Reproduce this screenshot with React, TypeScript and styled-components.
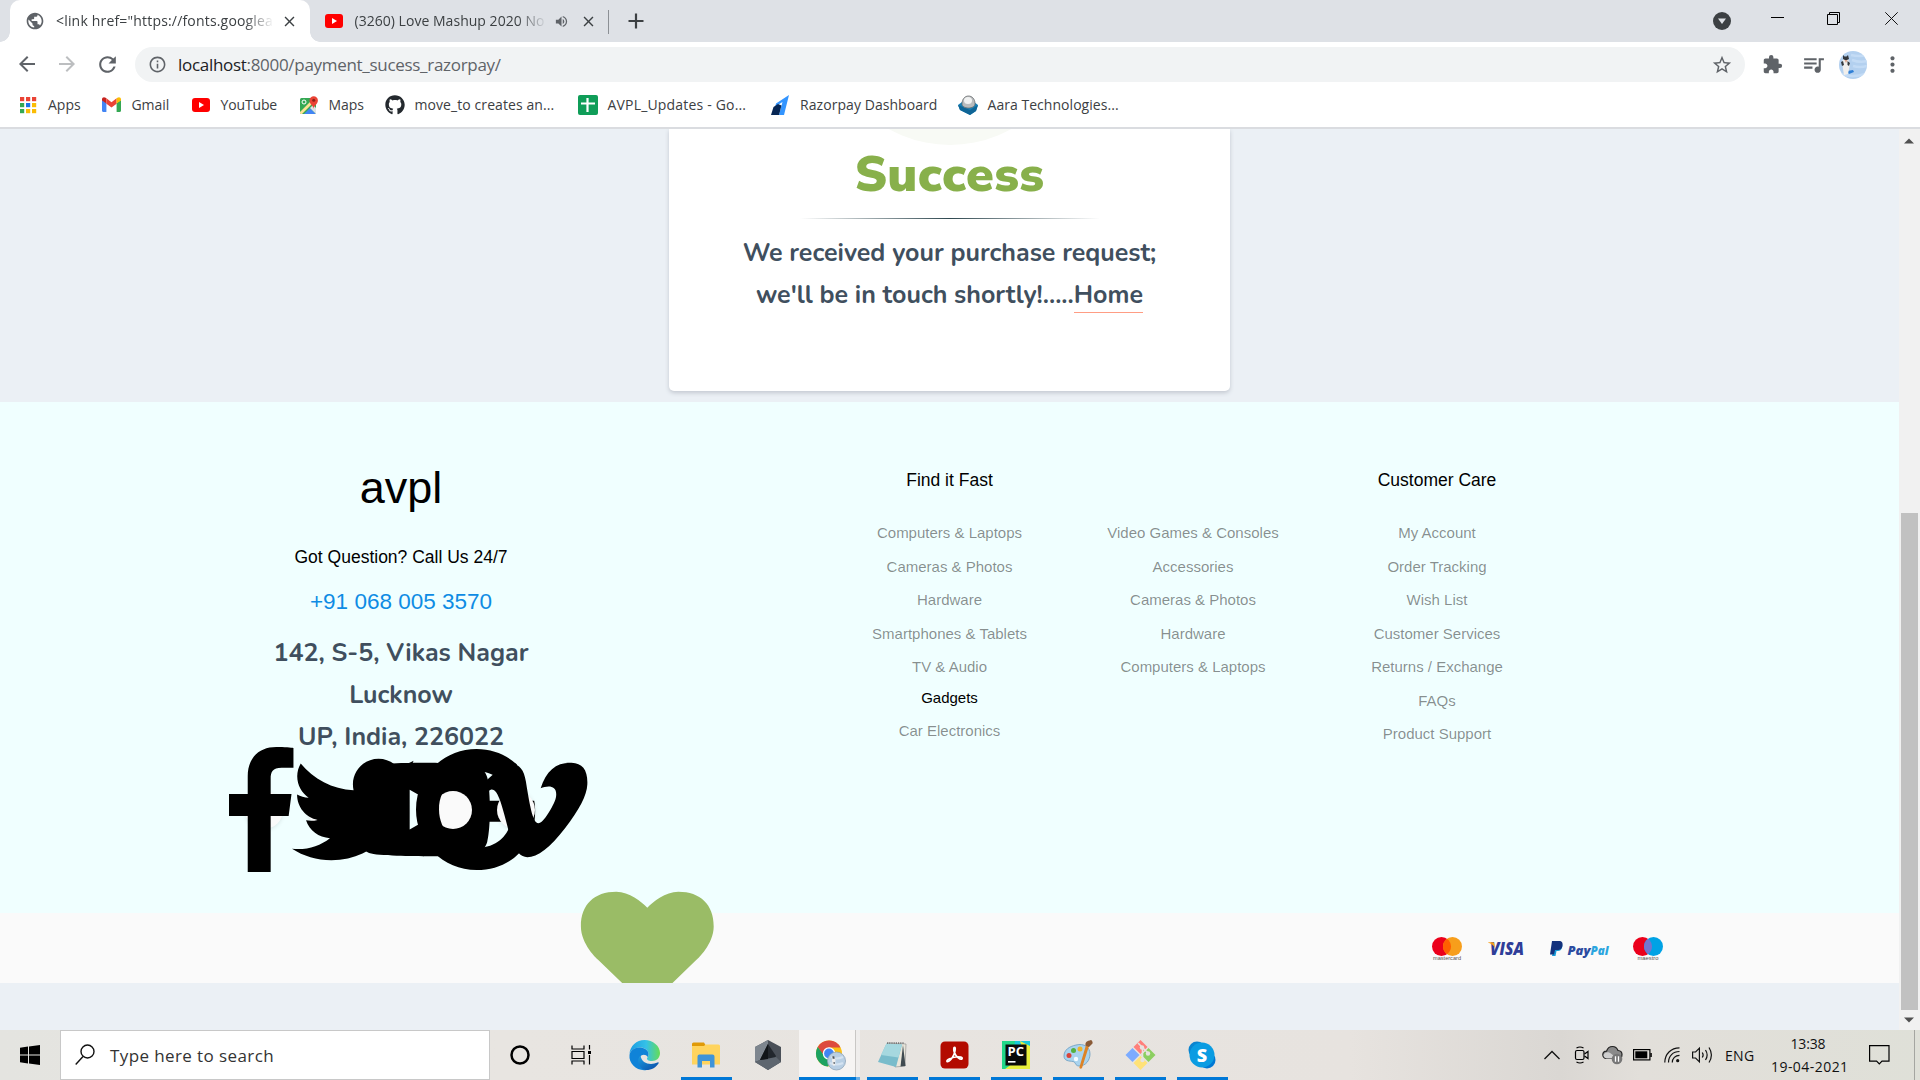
import React from "react";
import styled, { createGlobalStyle, css } from "styled-components";
import {
  MdArrowBack,
  MdArrowForward,
  MdClose,
  MdExtension,
  MdInfoOutline,
  MdMoreVert,
  MdPublic,
  MdQueueMusic,
  MdRefresh,
  MdStarBorder,
  MdVolumeUp,
} from "react-icons/md";
import { FaGithub } from "react-icons/fa";

const GlobalStyle = createGlobalStyle`
  *, *::before, *::after { box-sizing: border-box; }
  body { margin: 0; overflow: hidden; background: #ebf0f5; }
  p, h1, h3, ul { margin: 0; padding: 0; font-weight: 400; }
  ul { list-style: none; }
  svg { display: block; flex: none; overflow: visible; }
`;

const ui = `"Segoe UI", "Open Sans", "Noto Sans", sans-serif`;
const arial = `"Liberation Sans", Arial, sans-serif`;
const nunito = `Nunito, Lato, "Open Sans", sans-serif`;

const Screen = styled.div`
  width: 1920px;
  height: 1080px;
  display: flex;
  flex-direction: column;
  overflow: hidden;
  font-family: ${ui};
`;

/* ---------- Browser window ---------- */

const TabStrip = styled.div`
  height: 42px;
  flex: none;
  display: flex;
  align-items: stretch;
  padding-left: 10px;
  background: #dee1e6;
  color: #3c4043;
`;

const Tab = styled.div<{ $active?: boolean; $w: number }>`
  position: relative;
  width: ${(p) => p.$w}px;
  display: flex;
  align-items: center;
  padding-left: 15px;
  font-size: 14px;
  ${(p) =>
    p.$active &&
    css`
      background: #fff;
      border-radius: 10px 10px 0 0;
      &::before,
      &::after {
        content: "";
        position: absolute;
        bottom: 0;
        width: 10px;
        height: 10px;
      }
      &::before {
        left: -10px;
        background: radial-gradient(circle at 0 0, transparent 9.5px, #fff 10px);
      }
      &::after {
        right: -10px;
        background: radial-gradient(circle at 100% 0, transparent 9.5px, #fff 10px);
      }
    `}
`;

const TabTitle = styled.span<{ $w: number; $ls: number; $gap: number }>`
  width: ${(p) => p.$w}px;
  margin-left: ${(p) => p.$gap}px;
  letter-spacing: ${(p) => p.$ls}px;
  white-space: nowrap;
  overflow: hidden;
  line-height: 22px;
  mask-image: linear-gradient(90deg, #000 calc(100% - 30px), transparent);
`;

const TabButton = styled.span<{ $ml: number }>`
  margin-left: ${(p) => p.$ml}px;
  display: flex;
`;

const TabDivider = styled.div`
  width: 1px;
  height: 24px;
  margin: 10px 19px 0 0;
  background: #8c9095;
`;

const NewTab = styled.div`
  display: flex;
  align-items: center;
`;

const WindowButtons = styled.div`
  margin-left: auto;
  display: flex;
  align-items: flex-start;
  padding-top: 12px;
`;

const Slot = styled.div<{ $w: number }>`
  width: ${(p) => p.$w}px;
  flex: none;
  display: flex;
  justify-content: center;
  align-items: center;
`;

const Toolbar = styled.div`
  height: 46px;
  flex: none;
  display: flex;
  align-items: center;
  padding: 0 0 1px 15px;
  background: #fff;
  color: #5f6368;
`;

const NavButtons = styled.div`
  width: 120px;
  flex: none;
  display: flex;
  gap: 16px;
  svg:nth-child(2) { color: #bcbec0; }
`;

const AddressBar = styled.div`
  width: 1610px;
  flex: none;
  height: 35px;
  border-radius: 18px;
  background: #f1f3f4;
  display: flex;
  align-items: center;
  padding: 0 12px 0 13px;
`;

const Url = styled.span`
  margin: -1px auto 0 11px;
  font-size: 17px;
  letter-spacing: -0.3px;
  color: #5f6368;
  b { font-weight: 400; color: #202124; }
`;

const ToolbarIcons = styled.div`
  display: flex;
  align-items: center;
  margin-left: 7px;
`;

const Bookmarks = styled.div`
  height: 39px;
  flex: none;
  display: flex;
  align-items: center;
  padding: 0 0 6px 18px;
  background: #fff;
  color: #3c4043;
`;

const Bookmark = styled.div<{ $w: number; $ls: number }>`
  width: ${(p) => p.$w}px;
  display: flex;
  align-items: center;
  gap: 10px;
  font-size: 14px;
  line-height: 20px;
  letter-spacing: ${(p) => p.$ls}px;
  white-space: nowrap;
`;

const IconBox = styled.span`
  width: 20px;
  height: 20px;
  display: flex;
  align-items: center;
  justify-content: center;
`;

/* ---------- Page ---------- */

const Viewport = styled.div`
  height: 903px;
  flex: none;
  display: flex;
  border-top: 2px solid #dadce0;
`;

const Page = styled.main`
  width: 1899px;
  background: #ebf0f5;
`;

const Hero = styled.section`
  height: 273px;
  display: flex;
  justify-content: center;
  align-items: flex-start;
  overflow: hidden;
`;

const Card = styled.div`
  position: relative;
  width: 561px;
  height: 262px;
  padding-top: 16px;
  background: #fff;
  border-radius: 0 0 5px 5px;
  box-shadow: 0 2px 4px #c3c8d0;
  text-align: center;
`;

const BadgeClip = styled.div`
  position: absolute;
  inset: 0 0 auto 0;
  height: 16px;
  overflow: hidden;
  display: flex;
  justify-content: center;
  align-items: flex-end;
  &::after {
    content: "";
    flex: none;
    width: 250px;
    height: 250px;
    border-radius: 50%;
    background: #f8faf5;
  }
`;

const Title = styled.h1`
  position: relative;
  height: 60px;
  line-height: 60px;
  font-family: "Nunito Sans", "Open Sans", sans-serif;
  font-weight: 900;
  font-size: 50px;
  letter-spacing: 0.4px;
  color: #88b04b;
`;

const Rule = styled.div`
  width: 300px;
  height: 1px;
  margin: 13px auto 13px;
  background: linear-gradient(90deg, rgba(47, 72, 80, 0), #2f4850 50%, rgba(47, 72, 80, 0));
`;

const Strong = styled.p`
  font-family: ${nunito};
  font-weight: 660;
  font-size: 25px;
  line-height: 42px;
  color: #404f5e;
  white-space: nowrap;
`;

const HomeLink = styled.a`
  display: inline-block;
  line-height: 34px;
  border-bottom: 1px solid #ff9d84;
`;

const Footer = styled.footer`
  height: 511px;
  display: grid;
  grid-template-columns: 576px 244px 244px 244px;
  align-items: start;
  padding: 57px 0 0 251px;
  background: #f0ffff;
  font-family: ${arial};
`;

const Contact = styled.div`
  width: 300px;
  text-align: center;
`;

const Brand = styled.div`
  font-size: 45px;
  line-height: 58px;
  color: #000;
`;

const Question = styled.div`
  margin-top: 28px;
  font-size: 17.5px;
  line-height: 24px;
  color: #000;
`;

const Phone = styled.div`
  margin: 18px 0 15px;
  font-size: 22.5px;
  line-height: 30px;
  color: #0e8ce4;
`;

const Social = styled.ul`
  display: flex;
  gap: 24.9px;
  margin: 33.2px 0 0 -5.8px;
`;

const SocialItem = styled.li<{ $dx: number }>`
  position: relative;
  flex: none;
  width: 38px;
  height: 38px;
  border-radius: 50%;
  background: #fafafa;
  box-shadow: 0 1px 4px rgba(0, 0, 0, 0.1);
  svg {
    position: absolute;
    top: -44.5px;
    left: ${(p) => p.$dx}px;
  }
`;

const LinkColumn = styled.div`
  padding: 9px 0 0;
  text-align: center;
  &:nth-child(2) { padding-left: 1px; }
`;

const ColumnTitle = styled.h3`
  height: 24px;
  margin-bottom: 24px;
  font-size: 17.5px;
  line-height: 24px;
  color: #000;
`;

const FooterLink = styled.li<{ $current?: boolean }>`
  font-size: 15px;
  line-height: ${(p) => (p.$current ? 28 : 33.5)}px;
  margin-bottom: ${(p) => (p.$current ? 2 : 0)}px;
  color: ${(p) => (p.$current ? "#000" : "rgba(0, 0, 0, 0.45)")};
`;

const Copyright = styled.div`
  position: relative;
  height: 70px;
  display: flex;
  align-items: center;
  padding-left: 1432px;
  background: #fafafa;
`;

const HeartClip = styled.div`
  position: absolute;
  left: 577px;
  bottom: 0;
  height: 97px;
  overflow: hidden;
`;

const Payments = styled.div`
  display: flex;
  align-items: flex-start;
  padding-top: 3px;
`;

const ScrollTrack = styled.div`
  width: 21px;
  background: #f1f1f1;
  display: flex;
  flex-direction: column;
  align-items: center;
  justify-content: space-between;
  padding: 9px 1px 7px 0;
`;

const ScrollThumb = styled.div`
  width: 17px;
  height: 497px;
  margin: auto 0 7px;
  background: #c1c1c1;
`;

/* ---------- Taskbar ---------- */

const Taskbar = styled.div`
  height: 50px;
  flex: none;
  display: flex;
  background: linear-gradient(90deg, #e4e4e0 0, #e8e5e1 500px, #e7e3df 1350px, #dad7d3 1560px, #e2dfda 1640px, #dfe0d8 1920px);
  color: #111;
`;

const SearchBox = styled.div`
  width: 430px;
  display: flex;
  align-items: center;
  gap: 15px;
  padding-left: 14px;
  background: #fff;
  border: 1px solid #c8c8c8;
  font-size: 17px;
  letter-spacing: 0.4px;
  color: #333;
`;

const TaskCell = styled.div<{ $w: number; $state?: "open" | "active" }>`
  position: relative;
  width: ${(p) => p.$w}px;
  display: flex;
  align-items: center;
  justify-content: center;
  ${(p) =>
    p.$state &&
    css`
      &::after {
        content: "";
        position: absolute;
        bottom: 0;
        left: ${p.$state === "active" ? 0 : 6}px;
        width: ${p.$state === "active" ? 61 : 51}px;
        height: 3px;
        background: ${p.$state === "active" ? "linear-gradient(90deg, #0078d7 57px, #6aaee6 57px)" : "#0078d7"};
      }
    `}
  ${(p) =>
    p.$state === "active" &&
    css`
      background: linear-gradient(90deg, #f6f4f3 56px, #c9c7c5 56px, #c9c7c5 57px, #efedec 57px, #efedec 61px, transparent 61px);
    `}
`;

const Tray = styled.div`
  margin-left: auto;
  display: flex;
  align-items: center;
  font-size: 14px;
`;

const Lang = styled.span`
  width: 54px;
  padding-left: 8px;
  letter-spacing: 0.3px;
`;

const Clock = styled.div`
  width: 74px;
  text-align: center;
  line-height: 23px;
  letter-spacing: 0.45px;
  white-space: nowrap;
  div:first-child { letter-spacing: -0.15px; }
`;

const PeekEdge = styled.div`
  width: 6px;
  height: 50px;
  border-left: 1px solid #a5a6a1;
`;

/* ---------- Drawings ---------- */

const YouTubeIcon = ({ w = 18, h = 14 }) => (
  <svg width={w} height={h} viewBox="0 0 18 14">
    <rect width="18" height="14" rx="3" fill="#f00" />
    <path d="M7 4l5 3-5 3z" fill="#fff" />
  </svg>
);

const AppsIcon = () => {
  const colors = ["#ea4335", "#ea4335", "#ea4335", "#34a853", "#1a73e8", "#fbbc04", "#34a853", "#fbbc04", "#fbbc04"];
  return (
    <svg width="18" height="18" viewBox="0 0 18 18">
      {colors.map((c, i) => (
        <rect key={i} x={1 + (i % 3) * 6} y={1 + Math.floor(i / 3) * 6} width="4.2" height="4.2" fill={c} />
      ))}
    </svg>
  );
};

const GmailIcon = () => (
  <svg width="19" height="15" viewBox="0 0 19 15">
    <path d="M0 3v10.5C0 14.4.6 15 1.4 15h3V6z" fill="#4285f4" />
    <path d="M19 3v10.5c0 .9-.6 1.500-1.400 1.500h-3V6z" fill="#34a853" />
    <path d="M0 2.300C0 .3 2 -.5 3.600.7L4.400 1.300V6.500L0 3.500z" fill="#c5221f" />
    <path d="M4.400 1.300l5.100 3.900 5.100-3.900v5.400L9.500 10.500 4.400 6.700z" fill="#ea4335" />
    <path d="M19 2.300C19 .3 17-.5 15.400.7l-.8.6v5.200l4.400-3z" fill="#fbbc04" />
  </svg>
);

const MapsIcon = () => (
  <svg width="20" height="20" viewBox="0 0 20 20">
    <rect x="1" y="3" width="16" height="16" rx="1.500" fill="#34a853" />
    <path d="M1 17L15 3h2v2L3 19H2a1 1 0 0 1-1-1z" fill="#fde293" />
    <path d="M5 19l6-6 6 6z" fill="#4285f4" />
    <path d="M17 19l-6-6 3-3 3 3z" fill="#dfe3e6" />
    <circle cx="5" cy="7" r="2" fill="none" stroke="#fff" strokeWidth="1" />
    <path d="M14.500 14c0-3.500-4-4.500-4-8.500a4.200 4.200 0 0 1 8.400 0c0 4-4.400 5-4.400 8.500z" fill="#ea4335" />
    <circle cx="14.700" cy="5.300" r="1.500" fill="#8c2217" />
  </svg>
);

const SheetsIcon = () => (
  <svg width="20" height="20" viewBox="0 0 20 20">
    <rect width="20" height="20" rx="2" fill="#0f9d58" />
    <path d="M9.500 3v14M3 8.500h14" stroke="#fff" strokeWidth="2.200" />
  </svg>
);

const RazorpayIcon = () => (
  <svg width="18" height="20" viewBox="0 0 18 20">
    <path d="M18 0L5 8.500 4.300 11.500 11.500 7 8 20h5z" fill="#3395ff" />
    <path d="M7 9L2.500 12 0 20h8l2.500-9.500z" fill="#072654" />
  </svg>
);

const AaraIcon = () => (
  <svg width="20" height="20" viewBox="0 0 20 20">
    <path d="M0 10l4-3h12l4 3-2 6-6 4-10-5z" fill="#1580b8" />
    <path d="M0 10l12 5 8-5-2 6-6 4-10-5z" fill="#0f6596" />
    <path d="M4 9c0-5 3-8 6.500-8S17 4 17 8.500c0 3-3 4.500-6.500 4.500S4 11.500 4 9z" fill="#b9bcbe" stroke="#6a6d70" strokeWidth=".8" />
    <ellipse cx="10" cy="5.500" rx="4" ry="3.600" fill="#f1f2f2" />
  </svg>
);

const Avatar = () => (
  <svg width="28" height="28" viewBox="0 0 28 28">
    <defs>
      <clipPath id="avatarClip"><circle cx="14" cy="14" r="14" /></clipPath>
    </defs>
    <g clipPath="url(#avatarClip)">
      <rect width="28" height="28" fill="#b3d0ef" />
      <path d="M12 4q8 2 16 0M13 9q8 3 15 1M14 15q7 2 14 0M2 23q12 4 24 0" stroke="#c3dbf5" strokeWidth="2.500" fill="none" />
      <path d="M8 20l6-1 1 2-5 2z" fill="#2f7fd6" />
      <path d="M3 10l3-3 3 1 2 5-2 10-4 1-1-6z" fill="#f1efec" />
      <path d="M4 4l1.500 1.500h2L9 4l1 4-3 1.500L4 8zM2 11l2-1 1 4-2 1zM8.500 10l2.500 2-1 3-1.500-1z" fill="#33383d" />
      <path d="M5.500 9h3l-1.500 3z" fill="#d9a58c" />
    </g>
  </svg>
);

const TabSearchIcon = () => (
  <svg width="18" height="18" viewBox="0 0 18 18">
    <circle cx="9" cy="9" r="9" fill="#3c4043" />
    <path d="M5 6.500h8L9 12z" fill="#dee1e6" />
  </svg>
);

const socialGlyphs = [
  {
    w: 264,
    dx: -16.700,
    d: "M76.700 512V283H0v-91h76.700v-71.700C76.700 42.400 124.300 0 193.800 0c33.300 0 61.900 2.500 70.200 3.600V85h-48.200c-37.800 0-45.100 18-45.100 44.300V192H256l-11.700 91h-73.600v229",
  },
  {
    w: 512,
    dx: -15.900,
    d: "M459.370 151.716c.325 4.548.325 9.097.325 13.645 0 138.720-105.583 298.558-298.558 298.558-59.452 0-114.680-17.219-161.137-47.106 8.447.974 16.568 1.299 25.340 1.299 49.055 0 94.213-16.568 130.274-44.832-46.132-.975-84.792-31.188-98.112-72.772 6.498.974 12.995 1.624 19.818 1.624 9.421 0 18.843-1.300 27.614-3.573-48.081-9.747-84.143-51.980-84.143-102.985v-1.299c13.969 7.797 30.214 12.670 47.431 13.319-28.264-18.843-46.781-51.005-46.781-87.391 0-19.492 5.197-37.360 14.294-52.954 51.655 63.675 129.300 105.258 216.365 109.807-1.624-7.797-2.599-15.918-2.599-24.040 0-57.828 46.782-104.934 104.934-104.934 30.213 0 57.502 12.670 76.670 33.137 23.715-4.548 46.456-13.320 66.599-25.340-7.798 24.366-24.366 44.833-46.132 57.827 21.117-2.273 41.584-8.122 60.426-16.243-14.292 20.791-32.161 39.308-52.628 54.253z",
  },
  {
    w: 576,
    dx: -17.500,
    d: "M549.655 124.083c-6.281-23.650-24.787-42.276-48.284-48.597C458.781 64 288 64 288 64S117.220 64 74.629 75.486c-23.497 6.322-42.003 24.947-48.284 48.597-11.412 42.867-11.412 132.305-11.412 132.305s0 89.438 11.412 132.305c6.281 23.650 24.787 41.500 48.284 47.821C117.220 448 288 448 288 448s170.780 0 213.371-11.486c23.497-6.321 42.003-24.171 48.284-47.821 11.412-42.867 11.412-132.305 11.412-132.305s0-89.438-11.412-132.305zm-317.510 213.508V175.185l142.739 81.205-142.739 81.201z",
  },
  {
    w: 488,
    dx: -17.700,
    d: "M488 261.800C488 403.300 391.100 504 248 504 110.800 504 0 393.200 0 256S110.800 8 248 8c66.800 0 123 24.500 166.300 64.900l-67.500 64.900C258.500 52.600 94.300 116.600 94.300 256c0 86.500 69.100 156.600 153.700 156.600 98.200 0 135-70.400 140.800-106.900H248v-85.300h236.100c2.300 12.700 3.900 24.900 3.900 41.400z",
  },
  {
    w: 448,
    dx: -18.300,
    d: "M447.800 153.600c-2 43.600-32.400 103.300-91.400 179.100-60.900 79.200-112.400 118.800-154.600 118.800-26.100 0-48.200-24.100-66.300-72.300C100.300 250 85.300 174.300 56.200 174.300c-3.400 0-15.100 7.100-35.200 21.100L0 168.200c51.600-45.300 100.900-95.700 131.800-98.500 34.900-3.400 56.300 20.500 64.400 71.500 28.700 181.500 41.400 208.900 93.600 126.700 18.700-29.600 28.800-52.100 30.200-67.600 4.800-45.900-35.800-42.800-63.300-31 22-72.100 64.100-107.100 126.200-105.100 45.800 1.200 67.500 31.100 64.900 89.400z",
  },
];

const Heart = () => (
  <svg width="140.600" height="125" viewBox="0 0 576 512">
    <path
      fill="#9abc66"
      d="M414.900 24C361.800 24 312 65.700 288 89.300 264 65.700 214.200 24 161.100 24 70.300 24 16 76.900 16 165.500c0 72.600 66.800 133.400 69.200 135.400l187 180.800c8.800 8.500 22.800 8.500 31.600 0l186.700-180.200c2.700-2.700 69.500-63.500 69.500-136C560 76.900 505.700 24 414.900 24z"
    />
  </svg>
);

const CardCircles = ({ right, mix, label, labelWidth }: { right: string; mix: string; label: string; labelWidth: number }) => (
  <svg width="30" height="25" viewBox="0 0 30 25">
    <circle cx="9.500" cy="9.500" r="9.500" fill="#eb001b" />
    <circle cx="20.500" cy="9.500" r="9.500" fill={right} />
    <path d="M15 1.750a9.500 9.500 0 0 1 0 15.500a9.500 9.500 0 0 1 0-15.500z" fill={mix} />
    <text x={15 - labelWidth / 2} y="23" textLength={labelWidth} lengthAdjust="spacingAndGlyphs" fontFamily="Liberation Sans, sans-serif" fontSize="5" fill="#555">{label}</text>
  </svg>
);

const VisaLogo = () => (
  <svg width="37" height="25" viewBox="0 0 37 25">
    <text x="2" y="18" fontFamily="Open Sans, sans-serif" fontWeight="800" fontStyle="italic" fontSize="18" textLength="34" lengthAdjust="spacingAndGlyphs" fill="#2f3d98">VISA</text>
    <path d="M0 5.200h4.600c1 0 1.500.5 1.700 1.400l.9 4.600C5.800 8.500 3.300 6.500 0 5.600z" fill="#f7a01b" />
  </svg>
);

const PayPalLogo = () => (
  <svg width="59" height="25" viewBox="0 0 59 25">
    <path d="M4 8l8-1c1 2 0 7-4 7H6.500l-1 5H2z" fill="#179bd7" />
    <path d="M2 4h7c3 0 4 2 3.500 4.500C12 12 10 13 7.500 13H5l-1 4.500H0z" fill="#14327d" />
    <text x="17.500" y="17.500" fontFamily="Open Sans, sans-serif" fontWeight="800" fontStyle="italic" fontSize="13" textLength="23" lengthAdjust="spacingAndGlyphs" fill="#2b4ba0">Pay</text>
    <text x="40.500" y="17.500" fontFamily="Open Sans, sans-serif" fontWeight="800" fontStyle="italic" fontSize="13" textLength="18" lengthAdjust="spacingAndGlyphs" fill="#2ba5df">Pal</text>
  </svg>
);

const WindowsIcon = () => (
  <svg width="20" height="20" viewBox="0 0 20 20">
    <path d="M0 2.800l8-1.200v8H0zM9 1.500L20 0v9.600H9zM0 10.500h8v8l-8-1.200zM9 10.500h11V20L9 18.500z" fill="#000" />
  </svg>
);

const SearchIcon = () => (
  <svg width="20" height="22" viewBox="0 0 20 22" fill="none" stroke="#111" strokeWidth="1.400">
    <circle cx="12.500" cy="7.500" r="6.500" />
    <path d="M8 12.500L.7 20.500" />
  </svg>
);

const CortanaIcon = () => (
  <svg width="20" height="20" viewBox="0 0 20 20">
    <circle cx="10" cy="10" r="8.500" fill="none" stroke="#000" strokeWidth="2.500" />
  </svg>
);

const TaskViewIcon = () => (
  <svg width="21" height="20" viewBox="0 0 21 20" fill="none" stroke="#000" strokeWidth="1.200">
    <path d="M1 .5v3.500h12V.5M1 19.500V16h12v3.500M1 6.500h12v7H1zM18.500 0v4.500M18.500 10v9.500" />
    <rect x="17" y="6" width="3" height="3" fill="#000" stroke="none" />
  </svg>
);

const EdgeIcon = () => (
  <svg width="31" height="30" viewBox="0 0 31 30">
    <defs>
      <linearGradient id="edgeTop" x1="0" x2="1"><stop offset="0" stopColor="#1b9de2" /><stop offset=".55" stopColor="#35c1e8" /><stop offset="1" stopColor="#66dd55" /></linearGradient>
      <linearGradient id="edgeBody" x1="0" y1="0" x2="1" y2="1"><stop offset="0" stopColor="#1b9de2" /><stop offset="1" stopColor="#0b4aa5" /></linearGradient>
    </defs>
    <path d="M.5 14C1 6 7.500 0 15.500 0 24 0 31 6 31 13c0 5-3.500 8-8 8-4 0-5-1.500-5-2.500s1.500-1.700 1.500-4.500c0-4-4-6.500-8.500-6.500C5.500 7.500 1.500 10.500.5 14z" fill="url(#edgeTop)" />
    <path d="M.5 15C1 10.500 5.500 7.500 10.500 7.500c4.500 0 9 2.500 9 6.500 0 1.500-.5 2.500-1 3-1-2.500-5.500-3.500-7.500 0-1.500 4 1 12 6.500 13C8 31.500-.5 23.500.5 15z" fill="#0f83d8" />
    <path d="M11.500 15.500c-4.500 4-2 12.500 4.500 14.500 6 .5 11-2.500 13.500-6.500.5-1-.3-1.500-1-1C22 25.500 12.500 24 11.500 15.500z" fill="url(#edgeBody)" />
  </svg>
);

const FolderIcon = () => (
  <svg width="28" height="26" viewBox="0 0 28 26">
    <path d="M0 2a1.500 1.500 0 0 1 1.500-1.500H12L14 4H0z" fill="#e09a08" />
    <path d="M0 4h12l1.500-1.500H26.500A1.500 1.500 0 0 1 28 4v18.500H0z" fill="#ffd45e" />
    <path d="M5.500 25.500v-11A2 2 0 0 1 7.500 12.500h13a2 2 0 0 1 2 2v11H18V19h-8v6.500z" fill="#3f94d8" />
  </svg>
);

const HexIcon = () => (
  <svg width="28" height="30" viewBox="0 0 28 30">
    <path d="M14 0l13 7v15l-13 8-13-8V7z" fill="#4a5058" />
    <path d="M14 0L1 7v15l5-2 8-16z" fill="#7e868f" />
    <path d="M14 4l8 12-2 4-14 0z" fill="#22272d" />
    <path d="M6 20l16-3 5 5-13 8-13-8z" fill="#5e666f" />
    <path d="M14 4v15l-8 1z" fill="#111519" />
  </svg>
);

const ChromeIcon = () => (
  <svg width="34" height="32" viewBox="0 0 34 32">
    <circle cx="16" cy="14.500" r="13" fill="#fbc116" />
    <path d="M4.700 8A13 13 0 0 1 27.500 8.500H16l-5 9z" fill="#dd4b3e" />
    <path d="M4.700 8A13 13 0 0 0 15 27.500l5.500-9.500-9-1z" fill="#1da261" />
    <circle cx="16" cy="14.500" r="6.200" fill="#fff" />
    <circle cx="16" cy="14.500" r="4.900" fill="#4285f4" />
    <circle cx="23.500" cy="22" r="9" fill="#b9cfe4" stroke="#8da3b8" strokeWidth=".8" />
    <path d="M18 18q5 3 12 0M17 24q6 3 13 0" stroke="#d5e3f1" strokeWidth="2" fill="none" />
    <path d="M19.500 17l2 .5 1 4-.500 5-2 0-1-5z" fill="#f2f0ee" />
    <path d="M19.500 17l2 .5v2.500l-2-.5zM20.500 23h1.200v2h-1z" fill="#4a5560" />
  </svg>
);

const NotepadIcon = () => (
  <svg width="30" height="28" viewBox="0 0 30 28">
    <path d="M11 2L29 3l-1 22-10 1z" fill="#e9e6da" stroke="#888" strokeWidth=".6" />
    <path d="M26 4l2.500 21-5 .5z" fill="#3f4a50" />
    <path d="M9.500 2.500L25 3.500 19 26 1 21z" fill="#79bccb" />
    <path d="M9.500 2.500L25 3.500l-3.500 13L4 14z" fill="#a6d8df" />
    <path d="M10 2.200h17" stroke="#777" strokeWidth="1.800" strokeDasharray="1.200 1" />
  </svg>
);

const AcrobatIcon = () => (
  <svg width="29" height="28" viewBox="0 0 29 28">
    <rect x=".5" y=".5" width="28" height="27" rx="4.500" fill="#b30b00" />
    <path d="M7 20.500c-1-2 5-4 9-4.500 4-.4 7 .3 6 1.800-1.500 1.500-6-2-7.500-6-1-3-1-5.500 0-5.500 1.300 0 .8 4-.7 7.500S8.500 21.500 7 20.500z" fill="none" stroke="#fff" strokeWidth="1.700" />
  </svg>
);

const PyCharmIcon = () => (
  <svg width="28" height="28" viewBox="0 0 28 28">
    <path d="M0 0h15l-4 28H0z" fill="#21d789" />
    <path d="M13 0h15v14L10 20z" fill="#18c8d8" />
    <path d="M18 0l10 5v23H3L22 14z" fill="#e9ef3c" />
    <rect x="3.500" y="3.500" width="21" height="21" fill="#0a0a0a" />
    <text x="5.500" y="15" fontFamily="Open Sans, sans-serif" fontWeight="700" fontSize="11.500" textLength="16.500" lengthAdjust="spacingAndGlyphs" fill="#fff">PC</text>
    <rect x="6" y="20" width="7.500" height="1.600" fill="#fff" />
  </svg>
);

const PaintIcon = () => (
  <svg width="30" height="30" viewBox="0 0 30 30">
    <path d="M13 5c8-2 14 2 14 9 0 6-4 12-11 12-4 0-3-4-6-4.500C6 21 1 21 1 16 1 10 6 6.500 13 5z" fill="#a9d3ee" stroke="#6a9cc0" strokeWidth=".8" />
    <circle cx="6" cy="15.500" r="2.500" fill="#d9433a" />
    <circle cx="10.500" cy="10.500" r="2.500" fill="#56b13f" />
    <circle cx="17" cy="9" r="2.500" fill="#efb42d" />
    <circle cx="13" cy="19" r="2.200" fill="#f5fbff" />
    <path d="M23 5l3 1-7 22c-1 1.500-3 .5-2.500-1z" fill="#dd8326" />
    <path d="M22.500 5.500C22 2 24 1 28 0c1 .5 2 2 1.500 3.500L26 7z" fill="#8a5a36" />
  </svg>
);

const GitIcon = () => (
  <svg width="31" height="30" viewBox="0 0 31 30">
    <path d="M15.500 0l7 7-7 7-7-7z" fill="#ff7f7a" />
    <path d="M7.500 8l7 7-7 7-7-7z" fill="#7cabff" />
    <path d="M23.500 8l7 7-7 7-7-7z" fill="#8ccf60" />
    <path d="M15.500 16l7 7-7 7-7-7z" fill="#ffe278" />
    <path d="M13 3l10 10M17.500 8v12" stroke="#e7e3df" strokeWidth="1.600" />
    <circle cx="17.500" cy="20" r="2.200" fill="#e7e3df" />
    <circle cx="23" cy="13.500" r="2.200" fill="#e7e3df" />
    <circle cx="17" cy="7.500" r="2.200" fill="#e7e3df" />
  </svg>
);

const SkypeIcon = () => (
  <svg width="28" height="28" viewBox="0 0 28 28">
    <circle cx="9" cy="9" r="8.500" fill="#0a84d0" />
    <circle cx="19" cy="19" r="8.500" fill="#0078d4" />
    <circle cx="14" cy="14" r="12.500" fill="#0a9ce2" />
    <text x="14" y="20.500" textAnchor="middle" fontFamily="Open Sans, sans-serif" fontWeight="800" fontSize="18" fill="#fff">S</text>
  </svg>
);

const CameraTrayIcon = () => (
  <svg width="16" height="18" viewBox="0 0 16 18" fill="none" stroke="#000" strokeWidth="1.200">
    <rect x="1.500" y="4.500" width="8.500" height="9" rx="1.500" />
    <path d="M10.500 8l3.500-2.500v7L10.500 10M2.500 2Q6 0 9.500 2M2.500 16Q6 18 9.500 16" />
  </svg>
);

const CloudTrayIcon = () => (
  <svg width="21" height="20" viewBox="0 0 21 20">
    <path d="M5 13.500C2.500 13.500.8 12 .8 9.800.8 7.800 2.500 6.300 4.500 6.200 5.500 3 7.800 1.500 10.500 1.500c2.700 0 4.500 1.500 5.500 4 2.500.2 4 1.800 4 4 0 2.500-1.500 4-4 4z" fill="#8a8a8a" stroke="#222" strokeWidth="1.200" />
    <path d="M1.500 10c1-3 5-4 8-1l6 4.500H5c-2 0-3.500-1.500-3.500-3.500z" fill="#cfcfcf" />
    <circle cx="15" cy="14" r="5.300" fill="#777" />
    <path d="M13.500 11.300v5.400M16.500 11.300v5.400" stroke="#fff" strokeWidth="1.300" />
  </svg>
);

const BatteryIcon = () => (
  <svg width="19" height="12" viewBox="0 0 19 12">
    <rect x=".6" y=".6" width="16.300" height="10.300" fill="none" stroke="#000" strokeWidth="1.200" />
    <rect x="2.300" y="2.300" width="12" height="7" fill="#000" />
    <rect x="17.300" y="4" width="1.500" height="4" fill="#000" />
  </svg>
);

const WifiIcon = () => (
  <svg width="16" height="16" viewBox="0 0 16 16" fill="none" stroke="#111" strokeWidth="1.200">
    <path d="M.8 15.500C.8 7 7 .8 15.500.8M4.500 15.500C4.500 9 9 4.500 15.500 4.500M8.300 15.500c0-4 3-7.200 7.200-7.200" />
    <circle cx="13.700" cy="13.700" r="1.600" fill="#111" stroke="none" />
  </svg>
);

const VolumeIcon = () => (
  <svg width="21" height="18" viewBox="0 0 21 18" fill="none" stroke="#111" strokeWidth="1.200">
    <path d="M.6 6h3l3.800-3.800v13.600L3.600 12h-3zM10.300 6.500q1.700 2.500 0 5M13.500 4q3.300 5 0 10M17 1.500q4.800 7.500 0 15" />
  </svg>
);

const NoticeIcon = () => (
  <svg width="21" height="20" viewBox="0 0 21 20" fill="none" stroke="#000" strokeWidth="1.200">
    <path d="M.6.600h19.400v15.500h-7l-2.700 2.800-2.700-2.800h-7z" />
  </svg>
);

/* ---------- Data ---------- */

const bookmarks = [
  { label: "Apps", w: 83.500, ls: 0, icon: <AppsIcon /> },
  { label: "Gmail", w: 89, ls: -0.06, icon: <GmailIcon /> },
  { label: "YouTube", w: 108, ls: -0.15, icon: <YouTubeIcon /> },
  { label: "Maps", w: 86, ls: -0.08, icon: <MapsIcon /> },
  { label: "move_to creates an...", w: 193, ls: 0.08, icon: <FaGithub size={20} color="#24292e" /> },
  { label: "AVPL_Updates - Go...", w: 192.500, ls: 0.18, icon: <SheetsIcon /> },
  { label: "Razorpay Dashboard", w: 187.500, ls: 0.06, icon: <RazorpayIcon /> },
  { label: "Aara Technologies...", w: 160, ls: 0.04, icon: <AaraIcon /> },
];

const linkColumns = [
  {
    title: "Find it Fast",
    links: ["Computers & Laptops", "Cameras & Photos", "Hardware", "Smartphones & Tablets", "TV & Audio", "Gadgets", "Car Electronics"],
  },
  {
    title: "",
    links: ["Video Games & Consoles", "Accessories", "Cameras & Photos", "Hardware", "Computers & Laptops"],
  },
  {
    title: "Customer Care",
    links: ["My Account", "Order Tracking", "Wish List", "Customer Services", "Returns / Exchange", "FAQs", "Product Support"],
  },
];

const tasks: { icon: React.ReactNode; state?: "open" | "active" }[] = [
  { icon: <EdgeIcon /> },
  { icon: <FolderIcon />, state: "open" },
  { icon: <HexIcon /> },
  { icon: <ChromeIcon />, state: "active" },
  { icon: <NotepadIcon />, state: "open" },
  { icon: <AcrobatIcon />, state: "open" },
  { icon: <PyCharmIcon />, state: "open" },
  { icon: <PaintIcon />, state: "open" },
  { icon: <GitIcon />, state: "open" },
  { icon: <SkypeIcon />, state: "open" },
];

const Browser = () => (
  <>
    <TabStrip>
      <Tab $active $w={300}>
        <MdPublic size={20} color="#5f6368" />
        <TabTitle $w={218} $ls={0.18} $gap={11}>{'<link href="https://fonts.googlea'}</TabTitle>
        <TabButton $ml={7}><MdClose size={17} color="#3c4043" /></TabButton>
      </Tab>
      <Tab $w={298}>
        <YouTubeIcon />
        <TabTitle $w={192} $ls={0.03} $gap={11.500}>(3260) Love Mashup 2020 No</TabTitle>
        <TabButton $ml={7}><MdVolumeUp size={15} color="#5f6368" /></TabButton>
        <TabButton $ml={11}><MdClose size={17} color="#3c4043" /></TabButton>
      </Tab>
      <TabDivider />
      <NewTab>
        <svg width="16" height="16" viewBox="0 0 16 16"><path d="M8 .5v15M.5 8h15" stroke="#3c4043" strokeWidth="2.200" /></svg>
      </NewTab>
      <WindowButtons>
        <Slot $w={56}><TabSearchIcon /></Slot>
        <Slot $w={55}><svg width="13" height="12" viewBox="0 0 13 12"><path d="M0 5.500h13" stroke="#000" /></svg></Slot>
        <Slot $w={57}><svg width="13" height="13" viewBox="0 0 13 13" fill="none" stroke="#000"><path d="M.5 2.500h10v10H.5zM2.500 2.500v-2h10v10h-2" /></svg></Slot>
        <Slot $w={58}><svg width="13" height="13" viewBox="0 0 13 13"><path d="M.3.300l12.400 12.400M12.700.300L.3 12.700" stroke="#111" /></svg></Slot>
      </WindowButtons>
    </TabStrip>
    <Toolbar>
      <NavButtons>
        <MdArrowBack size={24} />
        <MdArrowForward size={24} />
        <MdRefresh size={25} />
      </NavButtons>
      <AddressBar>
        <MdInfoOutline size={19} />
        <Url><b>localhost</b>:8000/payment_sucess_razorpay/</Url>
        <MdStarBorder size={22} />
      </AddressBar>
      <ToolbarIcons>
        <Slot $w={40}><MdExtension size={21} /></Slot>
        <Slot $w={42}><MdQueueMusic size={25} /></Slot>
        <Slot $w={38}><Avatar /></Slot>
        <Slot $w={41}><MdMoreVert size={25} /></Slot>
      </ToolbarIcons>
    </Toolbar>
    <Bookmarks>
      {bookmarks.map((b) => (
        <Bookmark key={b.label} $w={b.w} $ls={b.ls}>
          <IconBox>{b.icon}</IconBox>
          {b.label}
        </Bookmark>
      ))}
    </Bookmarks>
  </>
);

const PageContent = () => (
  <Viewport>
    <Page>
      <Hero>
        <Card>
          <BadgeClip />
          <Title>Success</Title>
          <Rule />
          <Strong>We received your purchase request;</Strong>
          <Strong>we'll be in touch shortly!.....<HomeLink>Home</HomeLink></Strong>
        </Card>
      </Hero>
      <Footer>
        <Contact>
          <Brand>avpl</Brand>
          <Question>Got Question? Call Us 24/7</Question>
          <Phone>+91 068 005 3570</Phone>
          <Strong>142, S-5, Vikas Nagar</Strong>
          <Strong>Lucknow</Strong>
          <Strong>UP, India, 226022</Strong>
          <Social>
            {socialGlyphs.map((g) => (
              <SocialItem key={g.w} $dx={g.dx}>
                <svg width={(g.w * 125) / 512} height="125" viewBox={`0 0 ${g.w} 512`}>
                  <path d={g.d} />
                </svg>
              </SocialItem>
            ))}
          </Social>
        </Contact>
        {linkColumns.map((c, i) => (
          <LinkColumn key={i}>
            <ColumnTitle>{c.title}</ColumnTitle>
            <ul>
              {c.links.map((l) => (
                <FooterLink key={l} $current={l === "Gadgets"}>{l}</FooterLink>
              ))}
            </ul>
          </LinkColumn>
        ))}
      </Footer>
      <Copyright>
        <HeartClip><Heart /></HeartClip>
        <Payments>
          <Slot $w={30}><CardCircles right="#f79e1b" mix="#ff5f00" label="mastercard" labelWidth={28} /></Slot>
          <Slot $w={88}><VisaLogo /></Slot>
          <Slot $w={59}><PayPalLogo /></Slot>
          <Slot $w={77}><CardCircles right="#00a2e5" mix="#7375cf" label="maestro" labelWidth={21} /></Slot>
        </Payments>
      </Copyright>
    </Page>
    <ScrollTrack>
      <svg width="10" height="6" viewBox="0 0 10 6"><path d="M0 5.500L5 .500l5 5z" fill="#505050" /></svg>
      <ScrollThumb />
      <svg width="10" height="6" viewBox="0 0 10 6"><path d="M0 .500l5 5 5-5z" fill="#505050" /></svg>
    </ScrollTrack>
  </Viewport>
);

export default function App() {
  return (
    <Screen>
      <GlobalStyle />
      <Browser />
      <PageContent />
      <Taskbar>
        <TaskCell $w={60}><WindowsIcon /></TaskCell>
        <SearchBox><SearchIcon />Type here to search</SearchBox>
        <TaskCell $w={60}><CortanaIcon /></TaskCell>
        <TaskCell $w={63}><TaskViewIcon /></TaskCell>
        {tasks.map((t, i) => (
          <TaskCell key={i} $w={62} $state={t.state}>{t.icon}</TaskCell>
        ))}
        <Tray>
          <Slot $w={30}><svg width="16" height="10" viewBox="0 0 16 10"><path d="M.5 9L8 1.500 15.500 9" fill="none" stroke="#111" strokeWidth="1.300" /></svg></Slot>
          <Slot $w={30}><CameraTrayIcon /></Slot>
          <Slot $w={30}><CloudTrayIcon /></Slot>
          <Slot $w={30}><BatteryIcon /></Slot>
          <Slot $w={30}><WifiIcon /></Slot>
          <Slot $w={30}><VolumeIcon /></Slot>
          <Lang>ENG</Lang>
          <Clock>
            <div>13:38</div>
            <div>19-04-2021</div>
          </Clock>
          <Slot $w={69}><NoticeIcon /></Slot>
        </Tray>
        <PeekEdge />
      </Taskbar>
    </Screen>
  );
}
